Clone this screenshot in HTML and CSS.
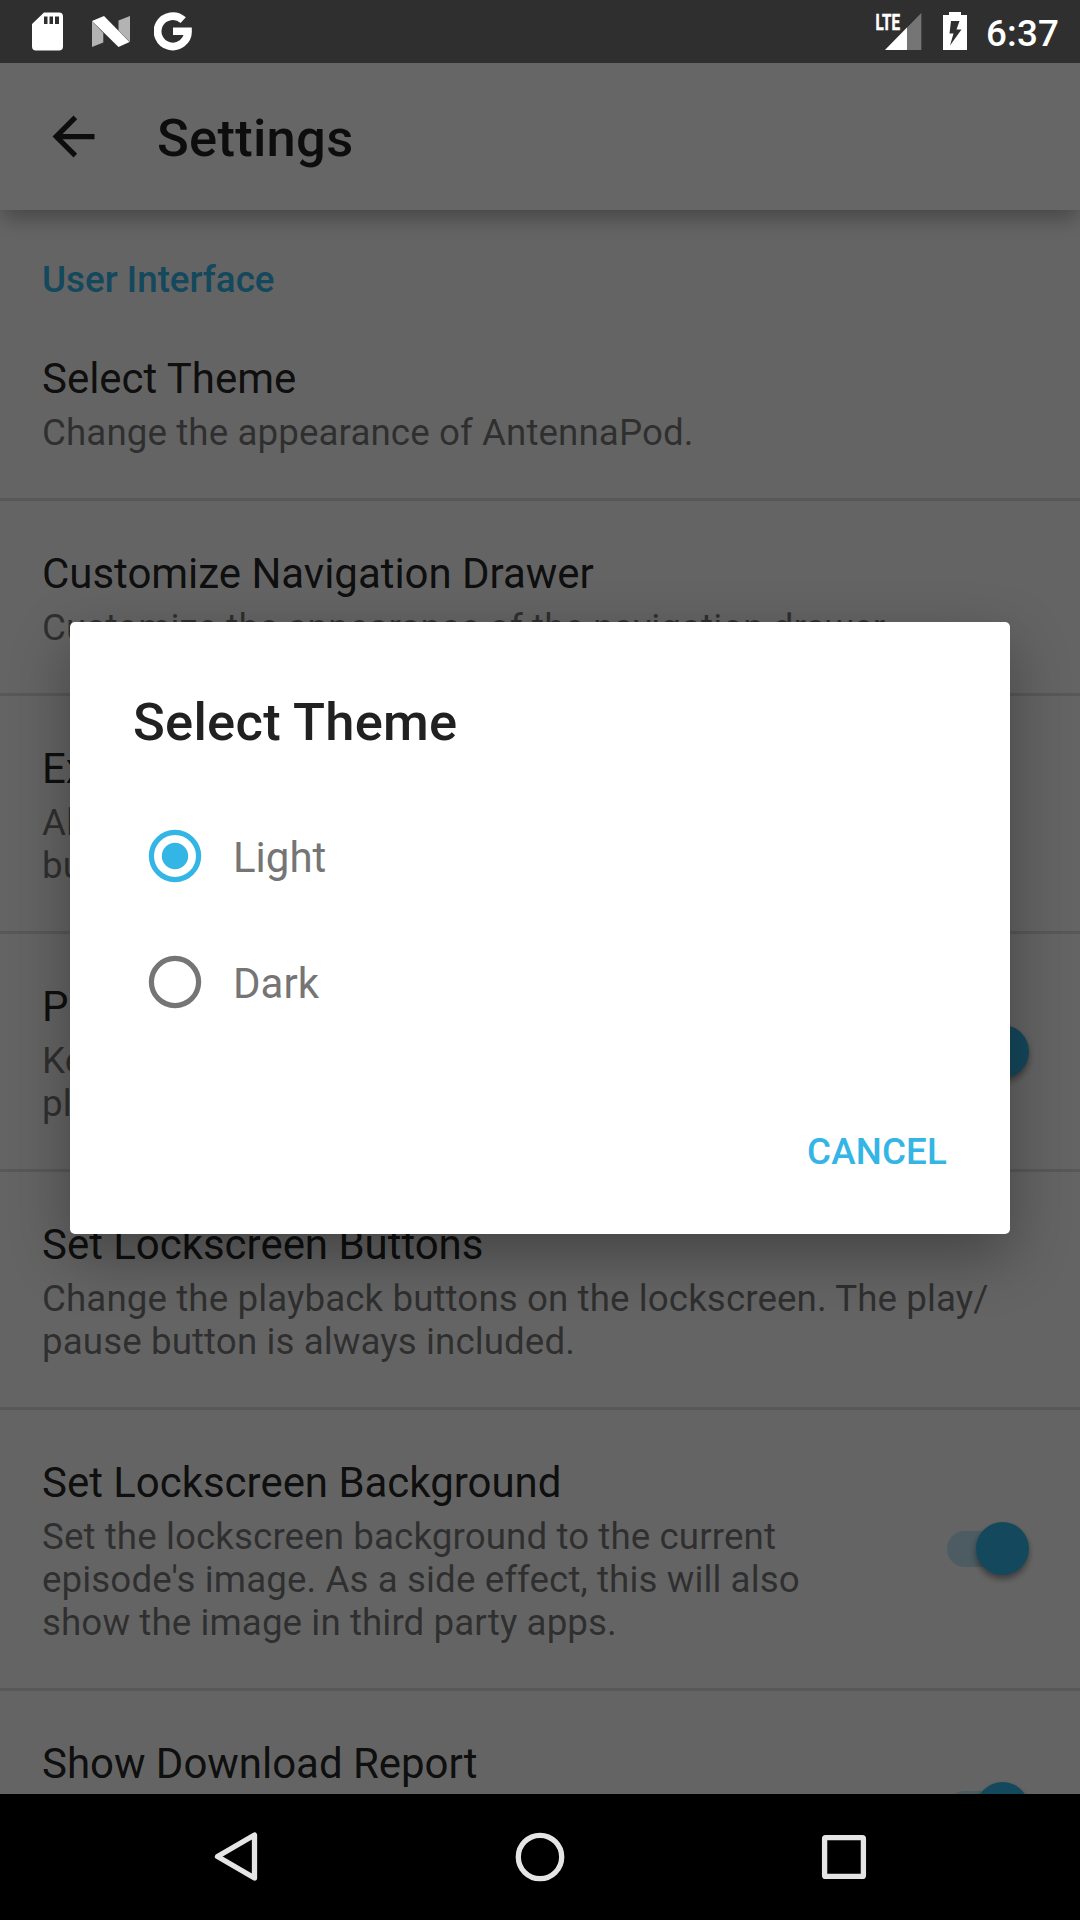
FILE: index.html
```html
<!DOCTYPE html>
<html lang="en">
<head>
<meta charset="utf-8">
<title>Settings</title>
<link rel="stylesheet" href="styles.css">
</head>
<body>
<div class="screen">
  <header class="status">
    <div class="status-icons">
      <svg class="sd" width="31" height="39" viewBox="0 0 31 39"><path fill="#fff" fill-rule="evenodd" d="M12 0.500H27a4 4 0 0 1 4 4V34.500a4 4 0 0 1-4 4H4a4 4 0 0 1-4-4V12ZM12 4.500V12h3.500V4.500ZM17.500 4.500V12H21V4.500ZM23 4.500V12h4V4.500Z"/></svg>
      <svg class="nougat" width="38" height="31" viewBox="0 0 38 31"><path fill="#b3b3b3" d="M0 5 11.300 17V26.500L0 31ZM26.500 4.500 38 0V26L26.500 14.500Z"/><path fill="#fff" d="M0 5 12 0 37.500 26 26.500 31Z"/></svg>
      <svg class="google" width="38" height="39" viewBox="0 0 38 39"><path fill="none" stroke="#fff" stroke-width="7.800" d="M29.200 8.200A15.200 15.200 0 1 0 34 19.200"/><path fill="#fff" d="M19 15.500H37.800V19.500L34 23H19Z"/></svg>
    </div>
    <div class="status-icons">
      <svg class="signal" width="46" height="38" viewBox="0 0 46 38"><path fill="#757575" d="M45.300 0V37H9Z"/><path fill="#2f2f2f" d="M0 0H26V18.500H0Z"/><path fill="#fff" d="M31 14.500V37H9Z"/><path fill="#2f2f2f" d="M20 0H26V17H20Z"/><text class="lte" x="-0.500" y="16.500" textLength="24.500" lengthAdjust="spacingAndGlyphs">LTE</text></svg>
      <svg class="battery" width="24" height="38" viewBox="0 0 24 38"><path fill="#fff" fill-rule="evenodd" d="M6 0H18V3H24V38H0V3H6ZM8 9 6.500 21.500H10.500L7 33.500 18.500 17.500H13.500L16.500 9Z"/></svg>
      <span class="clock">6:37</span>
    </div>
  </header>

  <div class="toolbar">
    <svg width="63" height="63" viewBox="0 0 24 24"><path fill="rgba(0,0,0,.87)" d="M20 11H7.830l5.590-5.590L12 4l-8 8 8 8 1.410-1.410L7.830 13H20v-2z"/></svg>
    <h1>Settings</h1>
  </div>

  <main class="list">
    <h2 class="section">User Interface</h2>
    <div class="item"><div class="copy"><div class="title">Select Theme</div><div class="summary">Change the appearance of AntennaPod.</div></div></div>
    <div class="item"><div class="copy"><div class="title">Customize Navigation Drawer</div><div class="summary">Customize the appearance of the navigation drawer.</div></div></div>
    <div class="item"><div class="copy"><div class="title">Expand Notification</div><div class="summary">Always expand the notification to show playback<br>buttons.</div></div></div>
    <div class="item"><div class="copy"><div class="title">Persistent Playback Controls</div><div class="summary">Keep notification and lockscreen controls when<br>playback is paused.</div></div><span class="switch"></span></div>
    <div class="item"><div class="copy"><div class="title">Set Lockscreen Buttons</div><div class="summary">Change the playback buttons on the lockscreen. The play/<br>pause button is always included.</div></div></div>
    <div class="item"><div class="copy"><div class="title">Set Lockscreen Background</div><div class="summary">Set the lockscreen background to the current<br>episode's image. As a side effect, this will also<br>show the image in third party apps.</div></div><span class="switch"></span></div>
    <div class="item"><div class="copy"><div class="title">Show Download Report</div><div class="summary">If downloads fail, generate a report that shows<br>the details of the failure.</div></div><span class="switch"></span></div>
  </main>

  <nav class="navbar">
    <svg width="304" height="126" viewBox="0 0 304 126"><path d="M133.500 62.500 170.500 41V84Z"/></svg>
    <svg width="304" height="126" viewBox="0 0 304 126"><circle cx="152" cy="63" r="21.700"/></svg>
    <svg width="304" height="126" viewBox="0 0 304 126"><rect x="132.600" y="43.600" width="38.800" height="38.800" rx="1"/></svg>
  </nav>

  <div class="scrim">
    <section class="dialog">
      <h2>Select Theme</h2>
      <div class="option"><svg width="54" height="54" viewBox="-27 -27 54 54"><circle r="23.600" fill="none" stroke="#33b5e5" stroke-width="5.200"/><circle r="13.200" fill="#33b5e5"/></svg><span>Light</span></div>
      <div class="option"><svg width="54" height="54" viewBox="-27 -27 54 54"><circle r="23.600" fill="none" stroke="#757575" stroke-width="5.200"/></svg><span>Dark</span></div>
      <div class="actions"><span class="button">CANCEL</span></div>
    </section>
  </div>
</div>
</body>
</html>
```
FILE: styles.css
```css
* { box-sizing: border-box; }
body { margin: 0; font-family: Roboto, sans-serif; }
h1, h2 { margin: 0; font-weight: 500; }
svg { display: block; flex: none; }

.screen {
  position: relative;
  width: 1080px;
  height: 1920px;
  overflow: hidden;
  display: flex;
  flex-direction: column;
  background: #fafafa;
}

.status {
  position: relative;
  z-index: 3;
  flex: none;
  height: 63px;
  padding: 0 21px 0 32px;
  display: flex;
  justify-content: space-between;
  background: #2f2f2f;
}
.status-icons { display: flex; align-items: flex-start; }
.sd { margin-top: 12px; }
.nougat { margin: 16px 25px 0 28.500px; }
.google { margin-top: 12px; margin-left: -0.500px; }
.signal { margin: 13px 21px 0 0; overflow: visible; }
.battery { margin: 12px 19.500px 0 0; }
.lte { font: 700 22.500px Roboto, sans-serif; fill: #fff; stroke: #fff; stroke-width: .500px; }
.clock {
  margin-top: 12px;
  font-size: 36.750px;
  line-height: 43px;
  font-weight: 500;
  letter-spacing: .150px;
  color: #fff;
}

.toolbar {
  position: relative;
  z-index: 1;
  flex: none;
  height: 147px;
  padding-left: 42px;
  display: flex;
  align-items: center;
  gap: 52px;
  background: #fff;
  box-shadow: 0 11px 20px -3px rgba(0, 0, 0, .3);
}
.toolbar h1 {
  padding-top: 3px;
  font-size: 52.500px;
  line-height: 62px;
  letter-spacing: .270px;
  color: rgba(0, 0, 0, .87);
}

.list { flex: 1; min-height: 0; overflow: hidden; }
.section {
  height: 96px;
  padding: 48px 42px 0;
  font-size: 36.750px;
  line-height: 43px;
  color: #33b5e5;
}
.item {
  display: flex;
  align-items: center;
  justify-content: space-between;
  padding: 0 48px 0 42px;
  border-bottom: 3px solid #dcdcdc;
}
.copy { padding: 48px 0 44px; white-space: nowrap; }
.title {
  margin-bottom: 8px;
  font-size: 42px;
  line-height: 49px;
  letter-spacing: -.030px;
  color: rgba(0, 0, 0, .87);
}
.summary {
  font-size: 36.750px;
  line-height: 43px;
  letter-spacing: .080px;
  color: rgba(0, 0, 0, .54);
}
.switch {
  position: relative;
  width: 85px;
  height: 36px;
  border-radius: 18px;
  background: linear-gradient(90deg, rgba(51, 181, 229, .3) 70px, transparent 70px);
}
.switch::after {
  content: "";
  position: absolute;
  top: -9px;
  right: 3px;
  width: 53px;
  height: 53px;
  border-radius: 50%;
  background: #33b5e5;
  box-shadow: 0 4px 6px rgba(0, 0, 0, .4);
}

.navbar {
  position: relative;
  z-index: 3;
  flex: none;
  height: 126px;
  display: flex;
  justify-content: center;
  background: #000;
}
.navbar svg { fill: none; stroke: #e5e5e5; stroke-width: 5.300; stroke-linejoin: round; }

.scrim {
  position: absolute;
  z-index: 2;
  inset: 0;
  padding: 622px 70px 0;
  background: rgba(0, 0, 0, .6);
}
.dialog {
  height: 612px;
  padding: 69px 63px 0;
  display: flex;
  flex-direction: column;
  border-radius: 5px;
  background: #fff;
  box-shadow: 0 22px 60px rgba(0, 0, 0, .32);
}
.dialog h2 {
  height: 102px;
  font-size: 52.500px;
  line-height: 62px;
  letter-spacing: .270px;
  color: #212121;
}
.option {
  height: 126px;
  padding-left: 15px;
  display: flex;
  align-items: center;
  gap: 31px;
  font-size: 42px;
  line-height: 49px;
  color: #757575;
}
.option span { padding-top: 2px; }
.actions { display: flex; justify-content: flex-end; padding-top: 85px; }
.button {
  font-size: 36.750px;
  line-height: 43px;
  font-weight: 500;
  letter-spacing: .150px;
  color: #33b5e5;
}
```
